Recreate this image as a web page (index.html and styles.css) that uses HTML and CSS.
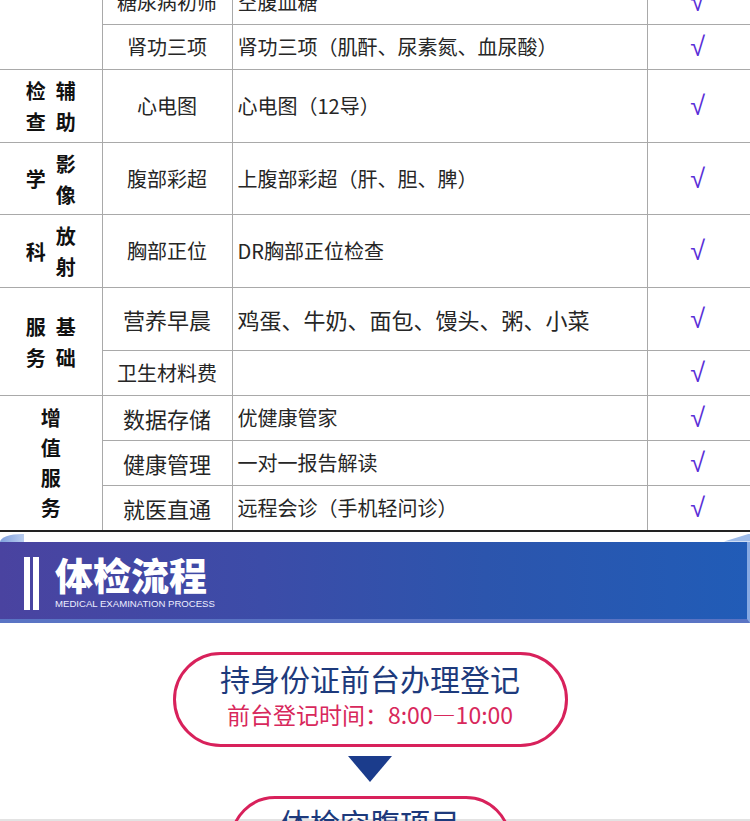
FILE: index.html
```html
<!DOCTYPE html>
<html lang="zh-CN">
<head>
<meta charset="utf-8">
<title>体检流程</title>
<link rel="stylesheet" href="styles.css">
</head>
<body>
<div class="page">
  <table class="items">
    <colgroup>
      <col class="c1"><col class="c2"><col class="c3"><col class="c4">
    </colgroup>
    <tbody>
      <tr class="h45">
        <td class="cat-cell" rowspan="2"></td>
        <td class="name">糖尿病初筛</td>
        <td class="desc">空腹血糖</td>
        <td class="chk">√</td>
      </tr>
      <tr class="h45">
        <td class="name">肾功三项</td>
        <td class="desc">肾功三项（肌酐、尿素氮、血尿酸）</td>
        <td class="chk">√</td>
      </tr>
      <tr class="h73">
        <td class="cat-cell"><div class="cat"><div class="cat-col"><span>检</span><span>查</span></div><div class="cat-col"><span>辅</span><span>助</span></div></div></td>
        <td class="name">心电图</td>
        <td class="desc">心电图（12导）</td>
        <td class="chk">√</td>
      </tr>
      <tr class="h72">
        <td class="cat-cell"><div class="cat"><div class="cat-col"><span>学</span></div><div class="cat-col"><span>影</span><span>像</span></div></div></td>
        <td class="name">腹部彩超</td>
        <td class="desc">上腹部彩超（肝、胆、脾）</td>
        <td class="chk">√</td>
      </tr>
      <tr class="h73">
        <td class="cat-cell"><div class="cat"><div class="cat-col"><span>科</span></div><div class="cat-col"><span>放</span><span>射</span></div></div></td>
        <td class="name">胸部正位</td>
        <td class="desc">DR胸部正位检查</td>
        <td class="chk">√</td>
      </tr>
      <tr class="h63">
        <td class="cat-cell" rowspan="2"><div class="cat"><div class="cat-col"><span>服</span><span>务</span></div><div class="cat-col"><span>基</span><span>础</span></div></div></td>
        <td class="name big">营养早晨</td>
        <td class="desc big">鸡蛋、牛奶、面包、馒头、粥、小菜</td>
        <td class="chk">√</td>
      </tr>
      <tr class="h45">
        <td class="name">卫生材料费</td>
        <td class="desc"></td>
        <td class="chk">√</td>
      </tr>
      <tr class="h45">
        <td class="cat-cell" rowspan="3"><div class="cat"><div class="cat-col tight"><span>增</span><span>值</span><span>服</span><span>务</span></div></div></td>
        <td class="name big">数据存储</td>
        <td class="desc">优健康管家</td>
        <td class="chk">√</td>
      </tr>
      <tr class="h45">
        <td class="name big">健康管理</td>
        <td class="desc">一对一报告解读</td>
        <td class="chk">√</td>
      </tr>
      <tr class="h45 last">
        <td class="name big">就医直通</td>
        <td class="desc">远程会诊（手机轻问诊）</td>
        <td class="chk">√</td>
      </tr>
    </tbody>
  </table>

  <section class="banner">
    <div class="banner-top"></div>
    <div class="banner-body">
      <div class="bars"><span class="bar"></span><span class="bar"></span></div>
      <div class="banner-text">
        <div class="banner-title">体检流程</div>
        <div class="banner-sub">MEDICAL EXAMINATION PROCESS</div>
      </div>
    </div>
  </section>

  <section class="flow">
    <div class="step step-wide">
      <div class="step-title">持身份证前台办理登记</div>
      <div class="step-note">前台登记时间：8:00—10:00</div>
    </div>
    <div class="arrow"></div>
    <div class="step step-narrow">
      <div class="step-title">体检空腹项目</div>
    </div>
  </section>
</div>
</body>
</html>
```

FILE: styles.css
```css
html, body {
  margin: 0;
  padding: 0;
  background: #ffffff;
}
body {
  width: 750px;
  height: 821px;
  overflow: hidden;
  font-family: "Noto Sans CJK SC", "Noto Sans", sans-serif;
}
.page {
  width: 750px;
}

/* ---------- table ---------- */
.items {
  width: 750px;
  table-layout: fixed;
  border-collapse: collapse;
  margin-top: -21px;
  color: #262626;
}
.c1 { width: 102px; }
.c2 { width: 130px; }
.c3 { width: 415px; }
.c4 { width: 103px; }

.items td {
  border: 1px solid #a9a9a9;
  padding: 0;
  vertical-align: middle;
  font-size: 20px;
  line-height: 24px;
}
.items td:first-child { border-left: none; }
.items td:last-child { border-right: none; }
.items tr.last td,
.items td.cat-cell[rowspan="3"] {
  border-bottom: 2px solid #222;
}

.h45 { height: 45px; }
.h63 { height: 63px; }
.h72 { height: 72px; }
.h73 { height: 73px; }

.name {
  text-align: center;
  white-space: nowrap;
}
.desc {
  text-align: left;
  padding-left: 5px !important;
  white-space: nowrap;
}
.big { font-size: 22px !important; }
.items td.chk {
  text-align: center;
  color: #5a2fd8;
  font-family: "Liberation Sans", Arial, sans-serif;
  font-size: 27px;
  line-height: 28px;
  padding-right: 2px;
}

.cat {
  display: flex;
  justify-content: center;
  align-items: center;
  gap: 10px;
  font-weight: 700;
  font-size: 20px;
  color: #111;
}
.cat-col {
  display: flex;
  flex-direction: column;
  align-items: center;
  line-height: 31px;
}
.cat-col.tight { line-height: 30px; }

/* ---------- banner ---------- */
.banner {
  position: relative;
  height: 91px;
}
.banner-top {
  height: 10px;
  background: #fff;
  position: relative;
}
.banner-top::before {
  content: "";
  position: absolute;
  left: 0;
  top: 2px;
  width: 24px;
  height: 8px;
  background: linear-gradient(90deg, #7f9fdc, #b9cdf0);
  border-top-left-radius: 22px 8px;
}
.banner-top::after {
  content: "";
  position: absolute;
  right: 0;
  top: 2px;
  width: 26px;
  height: 8px;
  background: #9dbbe9;
  clip-path: polygon(0 100%, 100% 0, 100% 100%);
}
.banner-body {
  height: 77px;
  display: flex;
  align-items: center;
  padding-left: 24px;
  background: linear-gradient(90deg, #4a43a0 0%, #3c4ca8 35%, #2c55ad 65%, #215cb7 100%);
  border-right: 3px solid #86a9e2;
  border-bottom: 4px solid #5a74c4;
  box-sizing: content-box;
  width: 723px;
}
.bars {
  display: flex;
  gap: 3px;
  height: 53px;
  margin-top: 6px;
}
.bar {
  width: 6px;
  height: 53px;
  background: #fff;
}
.banner-text {
  margin-left: 16px;
  margin-top: 4px;
  color: #fff;
}
.banner-title {
  font-size: 38px;
  line-height: 38px;
  font-weight: 900;
}
.banner-sub {
  font-family: "Liberation Sans", Arial, sans-serif;
  font-size: 9.6px;
  line-height: 12px;
  margin-top: 5px;
  color: #eef;
}

/* ---------- flow ---------- */
.flow {
  display: flex;
  flex-direction: column;
  align-items: center;
  height: 199px;
  background: linear-gradient(to bottom, #fff 196px, #e3e3e3 196px);
  padding-top: 29px;
  padding-right: 10px;
  box-sizing: border-box;
}
.flow > * {
  flex-shrink: 0;
}
.step {
  border: 3px solid #d8215b;
  border-radius: 50px;
  box-sizing: border-box;
  display: flex;
  flex-direction: column;
  align-items: center;
}
.step-wide {
  width: 395px;
  height: 95px;
  padding-top: 3px;
}
.step-narrow {
  width: 281px;
  height: 90px;
  padding-top: 3px;
}
.step-title {
  color: #1d3a7c;
  font-size: 30px;
  line-height: 40px;
}
.step-note {
  color: #d8285c;
  font-size: 23px;
  line-height: 30px;
  margin-top: 1px;
}
.arrow {
  width: 0;
  height: 0;
  border-left: 22px solid transparent;
  border-right: 22px solid transparent;
  border-top: 26px solid #1b3c8c;
  margin-top: 9px;
  margin-bottom: 14px;
}
```
